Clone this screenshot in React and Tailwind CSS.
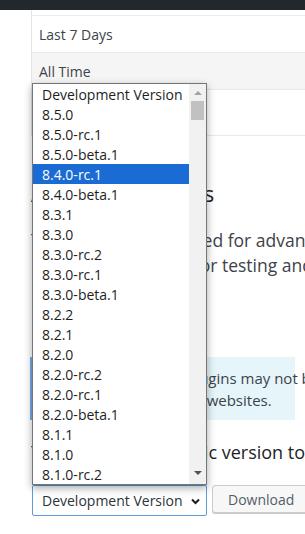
import React from "react";

const versions = [
  "Development Version",
  "8.5.0",
  "8.5.0-rc.1",
  "8.5.0-beta.1",
  "8.4.0-rc.1",
  "8.4.0-beta.1",
  "8.3.1",
  "8.3.0",
  "8.3.0-rc.2",
  "8.3.0-rc.1",
  "8.3.0-beta.1",
  "8.2.2",
  "8.2.1",
  "8.2.0",
  "8.2.0-rc.2",
  "8.2.0-rc.1",
  "8.2.0-beta.1",
  "8.1.1",
  "8.1.0",
  "8.1.0-rc.2",
];

export default function App() {
  return (
    <div
      className="relative w-[305px] h-[534px] overflow-hidden bg-white"
      style={{ fontFamily: "'Open Sans', 'Liberation Sans', sans-serif" }}
    >
      <div className="h-[10px] bg-[#23282d]" />

      {/* report table */}
      <div className="ml-[31px] border-l border-[#e5e5e5]">
        <div className="h-[5px]" />
        <div className="h-[37px] border-t border-[#ececec] flex items-center pl-[7px] text-[14px] text-[#3c434a]">
          Last 7 Days
        </div>
        <div className="h-[37px] border-t border-[#e9e9e9] bg-[#f5f5f5] flex items-center pl-[7px] text-[14px] text-[#3c434a]">
          All Time
        </div>
        <div className="h-[47px] border-t border-b border-[#e9e9e9] flex items-center pl-[7px] text-[14px] text-[#3c434a]">
          Custom
        </div>
      </div>

      {/* main content */}
      <div className="pl-[31px] pr-[10px]">
        <h2 className="mt-[42px] text-[22px] leading-[30px] text-[#1d2327] whitespace-nowrap">
          Available versions
        </h2>
        <p className="mt-[20px] text-[17.5px] leading-[25px] text-[#3c434a] whitespace-nowrap">
          This feature is intended for advanced
          <br />
          Developers, usually for testing and QA.
        </p>
        <div className="mt-[79px] -ml-[1px] border-l-4 border-[#72aee6] bg-[#e5f5fa] pl-[21px] pt-[10px] pb-[9px] text-[15px] leading-[22px] text-[#3c434a] whitespace-nowrap">
          Please note, some plugins may not be
          <br />
          compatible with your websites.
        </div>
        <h3 className="mt-[20px] text-[18px] leading-[25px] text-[#1d2327] whitespace-nowrap">
          You can pick a specific version to install:
        </h3>
        <div className="mt-[20px] flex items-start">
          <div className="w-[175px] h-[31px] ml-[1px] shrink-0 border border-[#5b9dd9] rounded-[2px] flex items-center justify-between pl-[9px] pr-[6px] text-[14px] text-[#2c3338] bg-white whitespace-nowrap overflow-hidden">
            <span>Development Version</span>
            <svg width="9" height="7" viewBox="0 0 9 7" className="mt-[1px] shrink-0">
              <polyline
                points="1,1.5 4.5,5 8,1.5"
                fill="none"
                stroke="#1d1d1d"
                strokeWidth="2"
              />
            </svg>
          </div>
          <div className="ml-[5px] h-[28px] shrink-0 pl-[15px] pr-[16px] border border-[#cccccc] rounded-[3px] bg-[#f7f7f7] shadow-[0_1px_0_#cccccc] flex items-center text-[14px] text-[#555d66] whitespace-nowrap">
            Download
          </div>
        </div>
      </div>

      {/* open dropdown list */}
      <div className="absolute left-[32px] top-[83px] w-[175px] h-[402px] border border-[#767676] bg-white shadow-[0_3px_8px_rgba(0,0,0,0.35)] flex">
        <div className="flex-1">
          {versions.map((v) => (
            <div
              key={v}
              className={
                v === "8.4.0-rc.1"
                  ? "h-[20px] pl-[9px] flex items-center text-[14px] bg-[#1a6bd4] text-white whitespace-nowrap"
                  : "h-[20px] pl-[9px] flex items-center text-[14px] text-[#1e1e1e] whitespace-nowrap"
              }
            >
              {v}
            </div>
          ))}
        </div>
        <div className="w-[17px] bg-[#f1f1f1] flex flex-col items-center">
          <svg width="8" height="5" viewBox="0 0 8 5" className="mt-[7px]">
            <polygon points="0,4 4,0 8,4" fill="#a3a3a3" />
          </svg>
          <div className="mt-[5px] w-[13px] h-[19px] bg-[#c1c1c1]" />
          <div className="flex-1" />
          <svg width="8" height="5" viewBox="0 0 8 5" className="mb-[8px]">
            <polygon points="0,0 8,0 4,4" fill="#505050" />
          </svg>
        </div>
      </div>
    </div>
  );
}
